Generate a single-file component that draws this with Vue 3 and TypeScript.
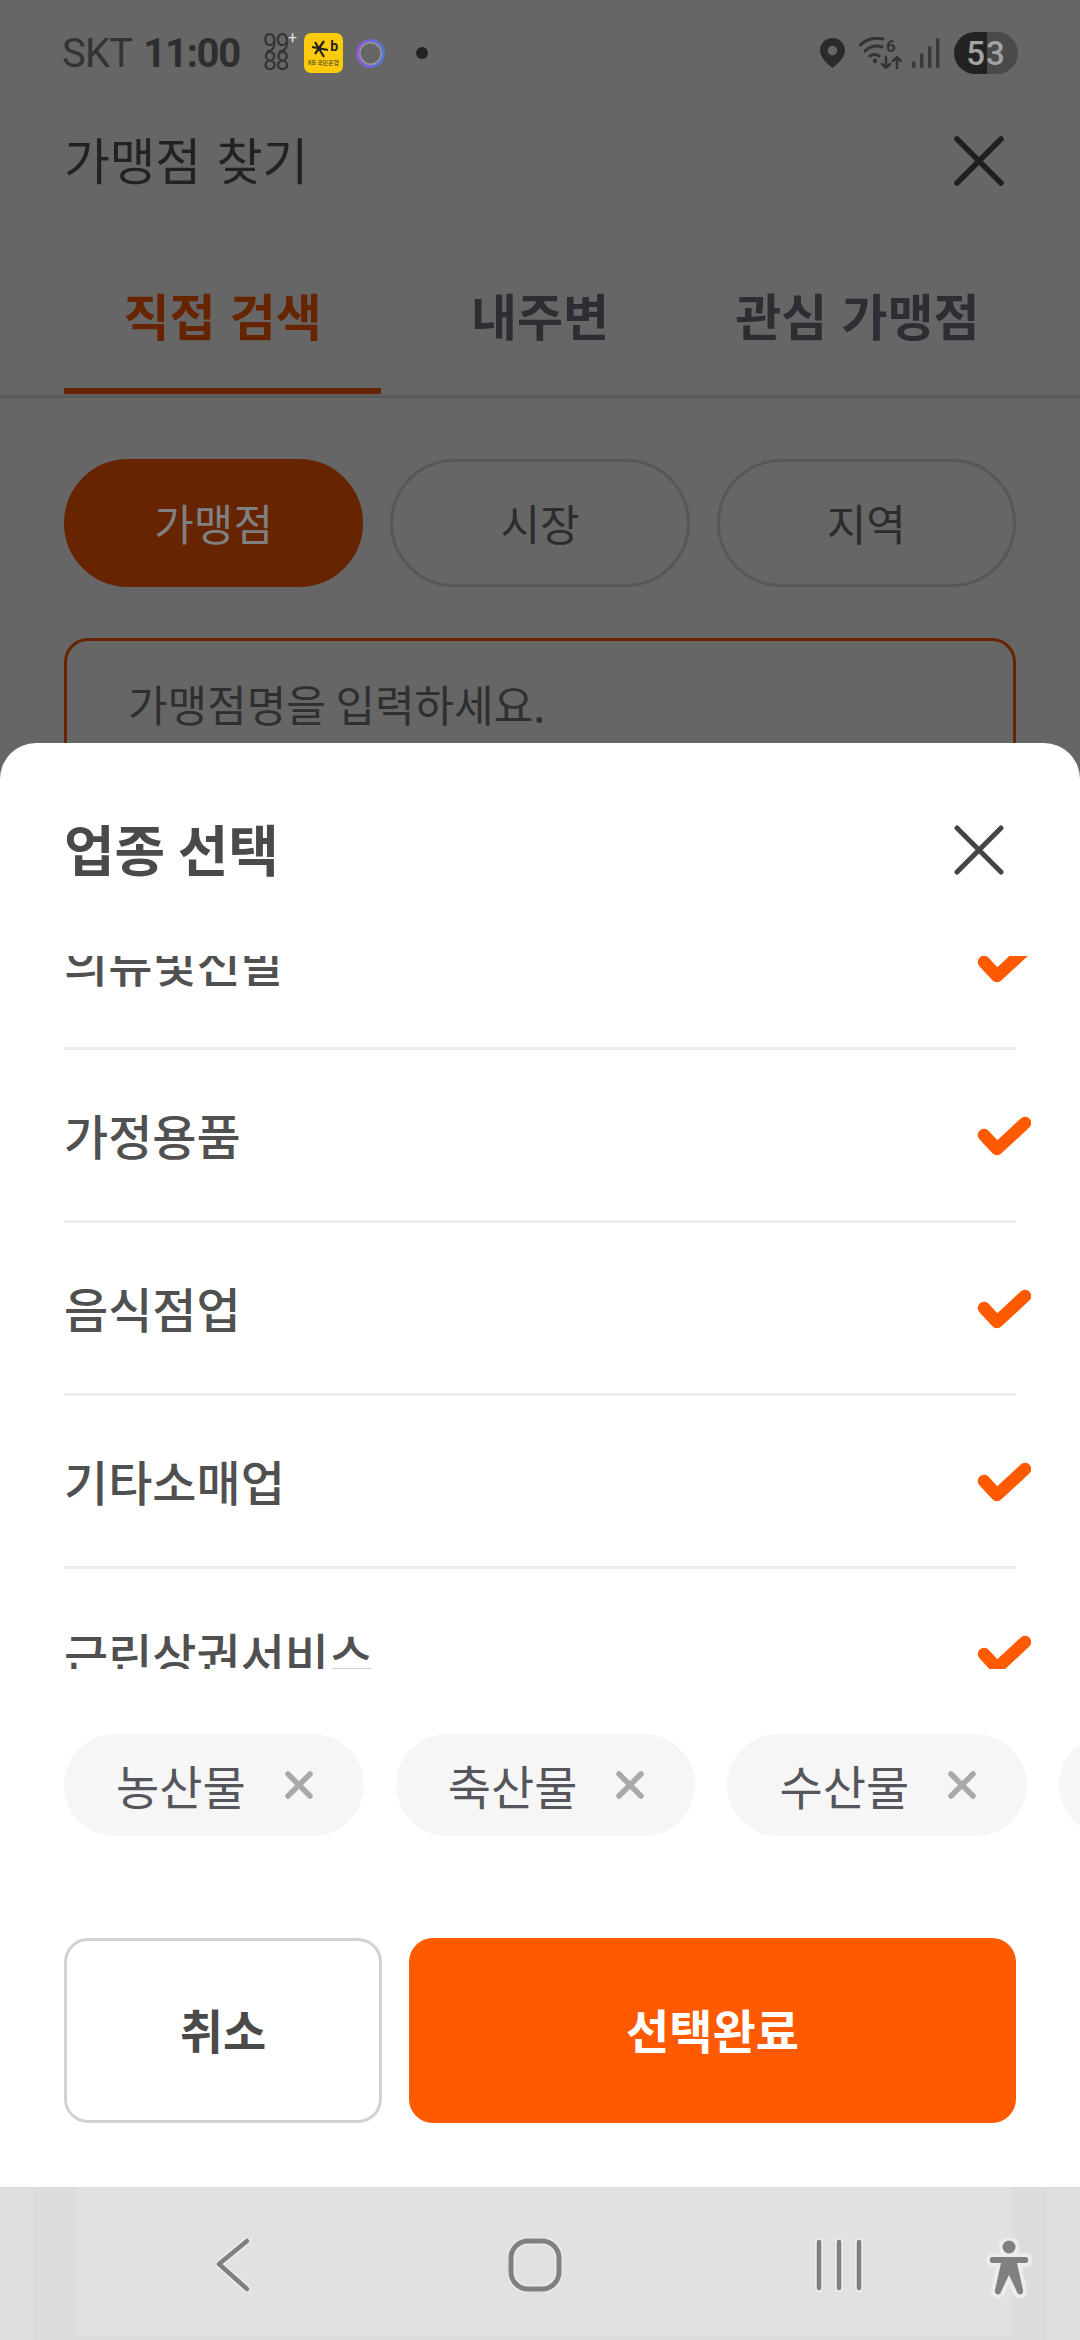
<script setup lang="ts">
const tabs = ['직접 검색', '내주변', '관심 가맹점']
const modes = ['가맹점', '시장', '지역']
const categories = ['의류및신발', '가정용품', '음식점업', '기타소매업', '근린상권서비스']
const chips = ['농산물', '축산물', '수산물', '가공식품']
</script>

<template>
  <div class="screen">
    <div class="page">
      <div class="status">
        <span class="carrier">SKT</span>
        <span class="clock">11:00</span>
        <span class="count"><span>99</span><span>88</span></span>
        <span class="plus">+</span>
        <span class="kb">
          <svg width="26" height="20" viewBox="0 0 26 20" fill="none" stroke="#222" stroke-width="2.200">
            <path d="M1 8 L17 11 M4 15 L13 2 M4 3 L13 18" />
          </svg>
          <b>b</b>
          <small>KB 국민은행</small>
        </span>
        <span class="ring"></span>
        <span class="dot"></span>
        <span class="status-right">
          <svg width="25" height="30" viewBox="0 0 26 31">
            <path fill="#2b2b2b" fill-rule="evenodd" d="M13 0C5.800 0 0 5.700 0 12.800 0 20 7.500 26.500 13 31 18.500 26.500 26 20 26 12.800 26 5.700 20.200 0 13 0ZM13 8A5 5 0 1 1 13 18 5 5 0 0 1 13 8Z" />
          </svg>
          <svg class="wifi" width="43" height="32" viewBox="0 0 43 32" fill="none" stroke="#333" stroke-width="3" stroke-linecap="round">
            <path d="M1 8C8 2 16 0 24 2M6 14C11 9 18 8 23 10M11 19C14 17 18 17 20 19" />
            <circle cx="16" cy="24" r="2.200" fill="#333" stroke="none" />
            <path stroke-width="2.500" d="M27 20V31M23 27L27 31 31 27M38 31V20M34 24L38 20 42 24" />
            <text x="27" y="15" class="wifi-six">6</text>
          </svg>
          <svg width="28" height="30" viewBox="0 0 28 30" fill="#3a3a3a">
            <rect x="0" y="23" width="3.500" height="7" rx="1.700" />
            <rect x="8" y="15" width="3.500" height="15" rx="1.700" />
            <rect x="16" y="8" width="3.500" height="22" rx="1.700" />
            <rect x="24" y="0" width="3.500" height="30" rx="1.700" />
          </svg>
          <span class="battery"><span>53</span></span>
        </span>
      </div>

      <header class="page-head">
        <h1>가맹점 찾기</h1>
        <svg width="50" height="50" viewBox="0 0 50 50" stroke="#1f1f1f" stroke-width="5.500" stroke-linecap="round">
          <path d="M3 3L47 47M47 3L3 47" />
        </svg>
      </header>

      <nav class="tabs">
        <div v-for="(tab, i) in tabs" :key="tab" class="tab" :class="{ active: i === 0 }">{{ tab }}</div>
      </nav>

      <div class="modes">
        <div v-for="(mode, i) in modes" :key="mode" class="mode" :class="{ active: i === 0 }">{{ mode }}</div>
      </div>

      <div class="search">가맹점명을 입력하세요.</div>
    </div>

    <div class="navbar">
      <svg class="nav-back" width="38" height="54" viewBox="0 0 38 54" fill="none" stroke-linecap="round" stroke-linejoin="round">
        <path stroke="#ececec" stroke-width="8" d="M32 3L4 26 32 51" />
        <path stroke="#808080" stroke-width="4.500" d="M32 3L4 26 32 51" />
      </svg>
      <svg class="nav-home" width="54" height="54" viewBox="0 0 54 54" fill="none">
        <rect x="3" y="3" width="48" height="48" rx="17" stroke="#ececec" stroke-width="8" />
        <rect x="3" y="3" width="48" height="48" rx="17" stroke="#808080" stroke-width="5" />
      </svg>
      <svg class="nav-recent" width="48" height="54" viewBox="0 0 48 54" fill="none" stroke-linecap="round">
        <path stroke="#ececec" stroke-width="8" d="M4 4V50M24 4V50M44 4V50" />
        <path stroke="#808080" stroke-width="4.500" d="M4 4V50M24 4V50M44 4V50" />
      </svg>
      <svg class="nav-a11y" width="50" height="62" viewBox="0 0 50 62">
        <g fill="#ececec" stroke="#ececec" stroke-width="8" stroke-linejoin="round">
          <circle cx="24" cy="9" r="6.500" />
          <path d="M7 19H41C44 19 44 25 41 25H32L38 52C39 57 33 58 32 54L24 37 16 54C15 58 9 57 10 52L16 25H7C4 25 4 19 7 19Z" />
        </g>
        <g fill="#808080">
          <circle cx="24" cy="9" r="6.500" />
          <path d="M7 19H41C44 19 44 25 41 25H32L38 52C39 57 33 58 32 54L24 37 16 54C15 58 9 57 10 52L16 25H7C4 25 4 19 7 19Z" />
        </g>
      </svg>
    </div>

    <section class="sheet">
      <header class="sheet-head">
        <h2>업종 선택</h2>
        <svg width="50" height="50" viewBox="0 0 50 50" stroke="#444" stroke-width="5" stroke-linecap="round">
          <path d="M3 3L47 47M47 3L3 47" />
        </svg>
      </header>

      <div class="list">
        <div class="list-inner">
          <div v-for="item in categories" :key="item" class="row">
            <span>{{ item }}</span>
            <svg width="54" height="40" viewBox="0 0 54 40" fill="none" stroke="#ff5a00" stroke-width="12.500" stroke-linecap="round" stroke-linejoin="round">
              <path d="M7 19L20 33 48 7" />
            </svg>
          </div>
        </div>
      </div>

      <div class="chips">
        <div v-for="chip in chips" :key="chip" class="chip">
          <span>{{ chip }}</span>
          <svg width="28" height="28" viewBox="0 0 28 28" stroke="#a9a9a9" stroke-width="5.500" stroke-linecap="round">
            <path d="M3 3L25 25M25 3L3 25" />
          </svg>
        </div>
      </div>

      <div class="actions">
        <button class="cancel">취소</button>
        <button class="done">선택완료</button>
      </div>
    </section>
  </div>
</template>

<style>
html,
body {
  margin: 0;
  background: #666;
}
</style>

<style scoped>
.screen {
  position: relative;
  display: flex;
  flex-direction: column;
  width: 1080px;
  height: 2340px;
  overflow: hidden;
  background: #666;
  font-family: 'Noto Sans CJK KR', 'Noto Sans', sans-serif;
}

.page {
  flex: 1;
  min-height: 0;
}

.status {
  display: flex;
  align-items: center;
  height: 106px;
  padding: 0 62px;
  box-sizing: border-box;
  color: #2e2e2e;
  font-family: Roboto, sans-serif;
}
.carrier {
  font-size: 40px;
  letter-spacing: -0.8px;
  color: #333;
}
.clock {
  margin-left: 11px;
  font-size: 40px;
  font-weight: 700;
  letter-spacing: -1.300px;
}
.count {
  display: flex;
  flex-direction: column;
  margin-left: 23px;
  font-size: 25px;
  line-height: 18px;
  letter-spacing: -1.500px;
  color: #333;
}
.plus {
  align-self: flex-start;
  margin-top: 30px;
  width: 16px;
  font-size: 16px;
  line-height: 16px;
  color: #ddd;
}
.kb {
  position: relative;
  display: flex;
  flex-direction: column;
  align-items: center;
  flex: none;
  box-sizing: border-box;
  width: 39px;
  height: 40px;
  padding-top: 6px;
  background: #fdcb0a;
  border-radius: 7px;
}
.kb b {
  position: absolute;
  top: 5px;
  right: 5px;
  font-size: 14px;
  line-height: 16px;
  color: #222;
}
.kb small {
  font-size: 6px;
  line-height: 8px;
  white-space: nowrap;
  color: #333;
  font-family: 'Noto Sans CJK KR', sans-serif;
}
.ring {
  box-sizing: border-box;
  width: 29px;
  height: 29px;
  margin-left: 13px;
  border-radius: 50%;
  border: 3px solid transparent;
  background:
    linear-gradient(#666, #666) padding-box,
    linear-gradient(90deg, #9455d8, #4f78dc) border-box;
  box-shadow: inset 0 0 0 1.500px #999;
}
.dot {
  width: 12px;
  height: 12px;
  margin-left: 31px;
  border-radius: 50%;
  background: #222;
}
.status-right {
  display: flex;
  align-items: center;
  margin-left: auto;
}
.status-right svg:nth-child(2) {
  margin-left: 14px;
}
.status-right svg:nth-child(3) {
  margin-left: 10px;
}
.wifi-six {
  fill: #333;
  stroke: none;
  font-size: 17px;
  font-weight: 700;
}
.battery {
  display: flex;
  align-items: center;
  justify-content: center;
  box-sizing: border-box;
  width: 64px;
  height: 42px;
  margin-left: 14px;
  border-radius: 21px;
  background: linear-gradient(90deg, #222 0 33px, #4a4a4a 33px);
  font-size: 33px;
  font-weight: 500;
  letter-spacing: 1px;
  color: #a2a2a2;
}

.page-head {
  display: flex;
  align-items: center;
  justify-content: space-between;
  height: 110px;
  padding: 0 78px 0 64px;
}
.page-head h1 {
  margin: 0 0 6px;
  font-size: 50px;
  font-weight: 400;
  letter-spacing: -0.4px;
  word-spacing: 5px;
  color: #222;
}
.page-head svg {
  margin-right: -2px;
}

.tabs {
  display: flex;
  padding: 0 64px;
  border-bottom: 3px solid #5a5a5a;
}
.tab {
  flex: 1;
  box-sizing: border-box;
  height: 179px;
  padding-top: 63px;
  line-height: 70px;
  text-align: center;
  font-size: 50px;
  font-weight: 700;
  word-spacing: 3px;
  color: #2c2e33;
}
.tab.active {
  color: #662400;
  border-bottom: 6px solid #662400;
  margin-bottom: 1px;
  height: 178px;
}

.modes {
  display: flex;
  gap: 27px;
  margin: 61px 64px 51px;
}
.mode {
  flex: 1;
  box-sizing: border-box;
  height: 128px;
  line-height: 120px;
  text-align: center;
  font-size: 43px;
  color: #2c2c2c;
  border: 3px solid #575757;
  border-radius: 64px;
}
.mode.active {
  background: #662400;
  border-color: #662400;
  color: #808080;
}

.search {
  box-sizing: border-box;
  height: 180px;
  margin: 0 64px;
  padding: 27px 61px;
  font-size: 43px;
  line-height: 70px;
  color: #2f2f2f;
  border: 3px solid #662400;
  border-radius: 24px;
}

.navbar {
  display: flex;
  align-items: center;
  box-sizing: border-box;
  height: 153px;
  padding: 2px 0 0 215px;
  background:
    linear-gradient(#e1e1e1, #e1e1e1) 76px 0 / 936px 149px no-repeat,
    linear-gradient(90deg, #dfdfdf 0 33px, #dcdcdc 33px 1047px, #dfdfdf 1047px);
}
.nav-home {
  margin-left: 255px;
}
.nav-recent {
  margin-left: 253px;
}
.nav-a11y {
  margin-left: 122px;
  margin-top: 9px;
}

.sheet {
  position: absolute;
  left: 0;
  right: 0;
  bottom: 153px;
  display: flex;
  flex-direction: column;
  height: 1444px;
  background: #fff;
  border-radius: 36px 36px 0 0;
}
.sheet-head {
  display: flex;
  align-items: center;
  justify-content: space-between;
  flex: none;
  height: 213px;
  padding: 0 78px 0 64px;
}
.sheet-head h2 {
  margin: 0 0 6px;
  font-size: 55px;
  font-weight: 700;
  color: #4a4a4a;
}
.sheet-head svg {
  margin-right: -2px;
}

.list {
  flex: none;
  height: 713px;
  padding: 0 64px;
  overflow: hidden;
}
.list-inner {
  margin-top: -79px;
}
.row {
  display: flex;
  align-items: center;
  justify-content: space-between;
  box-sizing: border-box;
  height: 173px;
  border-bottom: 3px solid #eee;
  font-size: 48px;
  font-weight: 500;
  color: #505050;
}
.row span {
  margin-bottom: 2px;
}
.row svg {
  margin: 2px -15px 0 0;
}

.chips {
  display: flex;
  flex: none;
  gap: 32px;
  margin: 65px 0 0 64px;
}
.chip {
  display: flex;
  align-items: center;
  flex: none;
  box-sizing: border-box;
  height: 102px;
  padding: 0 51px 0 52px;
  gap: 39px;
  border-radius: 51px;
  background: #f6f6f6;
  font-size: 47px;
  color: #55565c;
}
.chip span {
  margin-bottom: 2px;
}

.actions {
  display: flex;
  flex: none;
  gap: 27px;
  height: 185px;
  margin: 102px 64px 0;
}
.actions button {
  box-sizing: border-box;
  padding: 0 0 4px;
  border-radius: 24px;
  font-family: inherit;
  font-size: 47px;
  font-weight: 700;
}
.cancel {
  width: 318px;
  background: #fff;
  border: 3px solid #d2d2d2;
  color: #4a4a4a;
}
.done {
  flex: 1;
  background: #ff5a00;
  border: 0;
  color: #fff;
}
</style>
